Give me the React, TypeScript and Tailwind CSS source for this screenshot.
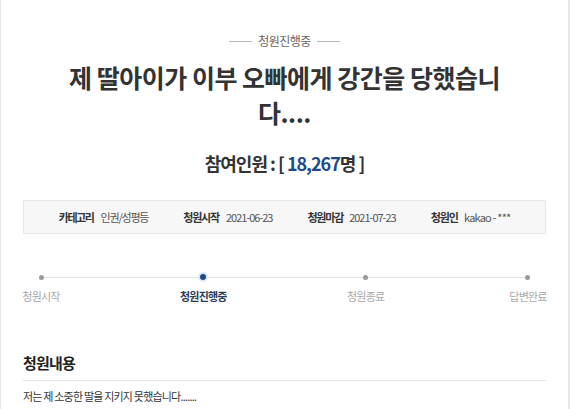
import React from "react";

const KR = { fontFamily: '"Noto Sans CJK KR", "Noto Sans", sans-serif' };

const steps = [
  { label: "청원시작", active: false },
  { label: "청원진행중", active: true },
  { label: "청원종료", active: false },
  { label: "답변완료", active: false },
];

export default function App() {
  return (
    <div
      className="w-[570px] h-[409px] overflow-hidden bg-white border-l border-r-2 border-[#e8e8e8]"
      style={KR}
    >
      <div className="flex flex-col items-center pt-[33px]">
        <div className="flex items-center gap-[6px] h-[16px]">
          <span className="block w-[23px] h-px bg-[#b5b5b5]" />
          <span className="text-[12px] leading-[16px] text-[#666] tracking-[-0.5px]">청원진행중</span>
          <span className="block w-[23px] h-px bg-[#b5b5b5]" />
        </div>
        <h1 className="mt-[11px] text-center text-[25px] leading-[35px] font-bold text-[#333] tracking-[-0.5px]">
          제 딸아이가 이부 오빠에게 강간을 당했습니
          <br />
          다....
        </h1>
        <div className="mt-[21px] text-[18px] leading-[24px] font-bold text-[#333] tracking-[-1px]">
          참여인원 : [ <span className="text-[#1e4b86]">18,267</span>명 ]
        </div>
      </div>

      <div className="mx-[22px] mt-[25px] h-[34px] bg-[#f7f7f7] border border-[#e6e6e6] flex items-center justify-center gap-[35px] text-[11px] leading-[14px] text-[#333]">
        <div className="flex items-center gap-[7px]">
          <span className="font-bold tracking-[-1.4px]">카테고리</span>
          <span className="text-[#555] tracking-[-1.2px]">인권/성평등</span>
        </div>
        <div className="flex items-center gap-[7px]">
          <span className="font-bold tracking-[-1.2px]">청원시작</span>
          <span className="text-[#555] tracking-[-1px]">2021-06-23</span>
        </div>
        <div className="flex items-center gap-[6px]">
          <span className="font-bold tracking-[-1.2px]">청원마감</span>
          <span className="text-[#555] tracking-[-1px]">2021-07-23</span>
        </div>
        <div className="flex items-center gap-[6px]">
          <span className="font-bold tracking-[-1px]">청원인</span>
          <span className="text-[#555] tracking-[-0.8px]">kakao - ***</span>
        </div>
      </div>

      <div className="relative mx-[22px] mt-[38px] flex justify-between">
        <span className="absolute left-[18px] right-[18px] top-[5px] h-px bg-[#e2e2e2]" />
        {steps.map((s) => (
          <div key={s.label} className="relative w-[36px] flex flex-col items-center">
            <div className="h-[10px] flex items-center justify-center">
              {s.active ? (
                <span className="flex items-center justify-center w-[10px] h-[10px] rounded-full bg-[#dbe8f6]">
                  <span className="block w-[6px] h-[6px] rounded-full bg-[#1e4b86]" />
                </span>
              ) : (
                <span className="block w-[5px] h-[5px] rounded-full bg-[#9a9a9a]" />
              )}
            </div>
            <span
              className={
                "mt-[7px] whitespace-nowrap text-[11px] leading-[14px] tracking-[-0.8px] " +
                (s.active ? "font-bold text-[#2b3c57]" : "text-[#a8a8a8]")
              }
            >
              {s.label}
            </span>
          </div>
        ))}
      </div>

      <div className="mx-[22px] mt-[50px]">
        <div className="pb-[7px] border-b border-[#e3e3e3] text-[15px] leading-[20px] font-bold text-[#222] tracking-[-0.8px]">
          청원내용
        </div>
        <div className="pt-[7px] text-[11px] leading-[16px] text-[#333] tracking-[-0.8px]">
          저는 제 소중한 딸을 지키지 못했습니다.......
        </div>
      </div>
    </div>
  );
}
